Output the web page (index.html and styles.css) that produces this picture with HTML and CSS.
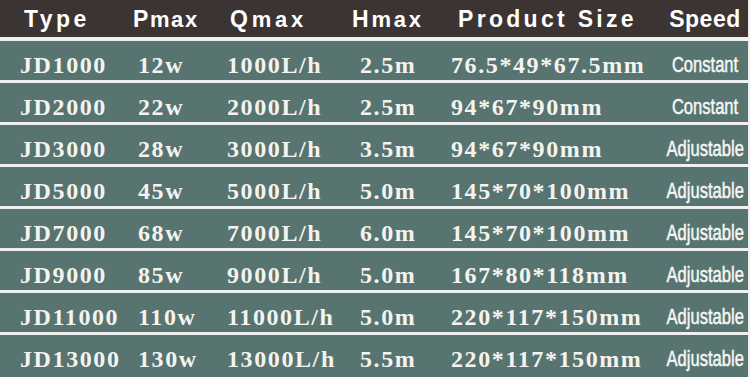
FILE: index.html
```html
<!DOCTYPE html>
<html>
<head>
<meta charset="utf-8">
<link rel="stylesheet" href="styles.css">
</head>
<body>
<div class="table">
  <div class="head">
    <div class="h h-type">Type</div>
    <div class="h h-m"><span class="cap">P</span>max</div>
    <div class="h h-m h-q"><span class="cap">Q</span>max</div>
    <div class="h h-m h-h"><span class="cap">H</span>max</div>
    <div class="h h-size">Product Size</div>
    <div class="h h-speed">Speed</div>
  </div>
  <div class="row"><div>JD1000</div><div>12w</div><div>1000L/h</div><div>2.5m</div><div>76.5*49*67.5mm</div><div class="spd"><span>Constant</span></div></div>
  <div class="row"><div>JD2000</div><div>22w</div><div>2000L/h</div><div>2.5m</div><div>94*67*90mm</div><div class="spd"><span>Constant</span></div></div>
  <div class="row"><div>JD3000</div><div>28w</div><div>3000L/h</div><div>3.5m</div><div>94*67*90mm</div><div class="spd"><span>Adjustable</span></div></div>
  <div class="row"><div>JD5000</div><div>45w</div><div>5000L/h</div><div>5.0m</div><div>145*70*100mm</div><div class="spd"><span>Adjustable</span></div></div>
  <div class="row"><div>JD7000</div><div>68w</div><div>7000L/h</div><div>6.0m</div><div>145*70*100mm</div><div class="spd"><span>Adjustable</span></div></div>
  <div class="row"><div>JD9000</div><div>85w</div><div>9000L/h</div><div>5.0m</div><div>167*80*118mm</div><div class="spd"><span>Adjustable</span></div></div>
  <div class="row"><div>JD11000</div><div>110w</div><div>11000L/h</div><div>5.0m</div><div>220*117*150mm</div><div class="spd"><span>Adjustable</span></div></div>
  <div class="row last"><div>JD13000</div><div>130w</div><div>13000L/h</div><div>5.5m</div><div>220*117*150mm</div><div class="spd"><span>Adjustable</span></div></div>
</div>
</body>
</html>
```
FILE: styles.css
```css
html, body {
  margin: 0;
  padding: 0;
  background: #eef1f0;
}
body {
  width: 750px;
  height: 377px;
  overflow: hidden;
}
.table {
  width: 748px;
  display: flex;
  flex-direction: column;
  gap: 3px;
  background: #eef1f0;
}
.head {
  height: 37px;
  margin-bottom: 1px;
  background: #3b3432;
  display: grid;
  grid-template-columns: 109px 97px 122px 106px 204px 86px;
  padding-left: 24px;
  color: #ffffff;
  font-family: "Liberation Sans", Arial, sans-serif;
  font-weight: bold;
  font-size: 23px;
  line-height: 37px;
  box-sizing: border-box;
}
.h {
  padding-top: 1px;
  white-space: nowrap;
}
.h-type { letter-spacing: 3.4px; }
.h-m { font-size: 22px; letter-spacing: 1.6px; }
.h-q { letter-spacing: 3.8px; }
.h-h { letter-spacing: 2.8px; }
.h-m .cap { font-size: 23px; }
.h-size { letter-spacing: 3.3px; }
.h-speed { letter-spacing: 0.5px; text-align: center; }
.row {
  height: 39px;
  background: #577470;
  display: grid;
  grid-template-columns: 118px 89px 133px 91px 211px 86px;
  padding-left: 20px;
  padding-top: 9px;
  box-sizing: border-box;
  color: #f3f3ef;
  font-family: "Liberation Serif", "Times New Roman", serif;
  font-weight: bold;
  font-size: 24px;
  line-height: 30px;
  letter-spacing: 1.6px;
  white-space: nowrap;
}
.row.last {
  height: 42px;
}
.spd {
  font-family: "Liberation Sans", Arial, sans-serif;
  font-weight: normal;
  font-size: 21.5px;
  letter-spacing: 0;
  text-align: center;
  color: #f6f6f4;
  display: flex;
  justify-content: center;
}
.spd span {
  display: inline-block;
  transform: scaleX(0.77);
  transform-origin: center;
  -webkit-text-stroke: 0.5px #f6f6f4;
}
```
